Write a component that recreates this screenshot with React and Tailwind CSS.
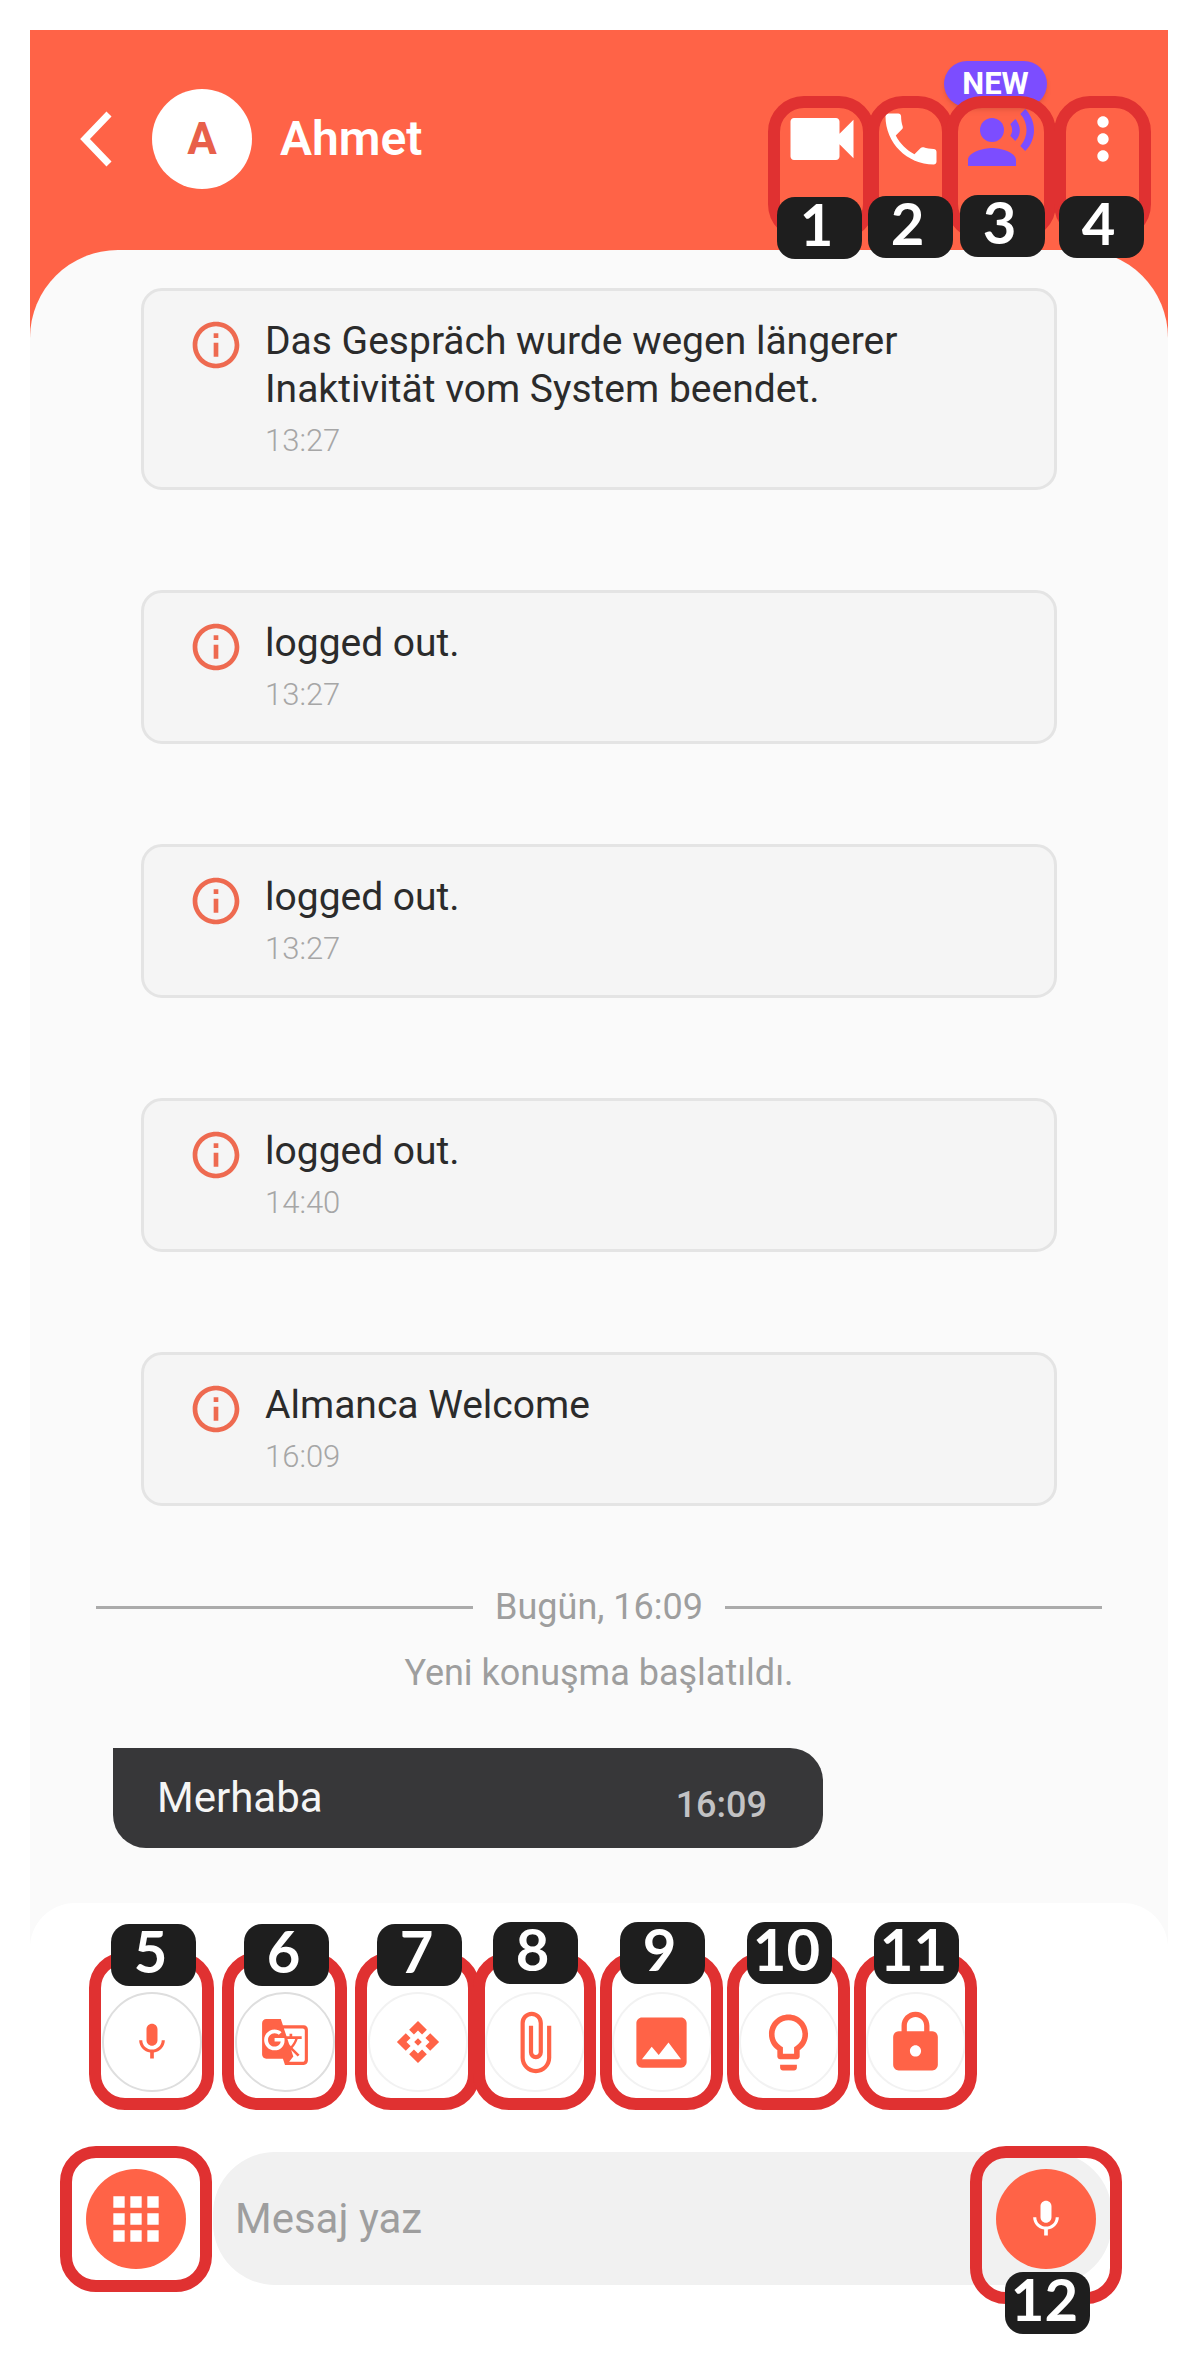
import { useState } from 'react'
import {
  MdVideocam,
  MdPhone,
  MdRecordVoiceOver,
  MdMoreVert,
  MdInfoOutline,
  MdMic,
  MdGTranslate,
  MdApi,
  MdAttachFile,
  MdImage,
  MdLightbulbOutline,
  MdLock,
  MdApps,
} from 'react-icons/md'

const notices = [
  { text: 'Das Gespräch wurde wegen längerer Inaktivität vom System beendet.', time: '13:27' },
  { text: 'logged out.', time: '13:27' },
  { text: 'logged out.', time: '13:27' },
  { text: 'logged out.', time: '14:40' },
  { text: 'Almanca Welcome', time: '16:09' },
]

const tools = [
  { n: 5, label: 'Dictate', icon: MdMic, size: 44, ring: 'border-[#dedede]' },
  { n: 6, label: 'Translate', icon: MdGTranslate, size: 50, ring: 'border-[#dedede]' },
  { n: 7, label: 'Actions', icon: MdApi, size: 46, ring: 'border-[#f2f2f2]' },
]

const attachments = [
  { n: 8, label: 'Attach file', icon: MdAttachFile },
  { n: 9, label: 'Send image', icon: MdImage },
  { n: 10, label: 'Suggestions', icon: MdLightbulbOutline },
  { n: 11, label: 'Lock chat', icon: MdLock },
]

function Frame() {
  return <span className="pointer-events-none absolute inset-0 rounded-[36px] border-[12px] border-[#e03131]" />
}

function Tag({ n, className }) {
  return (
    <span className={`absolute z-10 h-[62px] w-[85px] rounded-[18px] bg-[#1e1e1e] pr-1.5 text-center font-['Lato',sans-serif] text-[58px] font-bold leading-[54px] text-white ${className}`}>
      {n}
    </span>
  )
}

function HeaderButton({ n, label, className, tag, children }) {
  return (
    <button aria-label={label} className={`relative flex h-[144px] items-start justify-center ${className}`}>
      <span className="flex h-[86px] items-center justify-center">{children}</span>
      <Frame />
      <Tag n={n} className={tag} />
    </button>
  )
}

function ToolButton({ n, label, icon: Icon, size = 67, ring = 'border-[#f2f2f2]', className, tag }) {
  return (
    <button aria-label={label} className={`relative flex h-[158px] items-end justify-center pb-[18px] ${className}`}>
      <span className={`flex size-[100px] items-center justify-center rounded-full border-2 bg-white text-[#ff6347] ${ring}`}>
        <Icon size={size} />
      </span>
      <Frame />
      <Tag n={n} className={tag} />
    </button>
  )
}

function Notice({ text, time }) {
  return (
    <li className="flex items-start rounded-[21px] border-[3px] border-[#e4e4e4] bg-[#f5f5f5] py-[26px] pl-11 pr-[90px]">
      <MdInfoOutline size={56} className="shrink-0 text-[#ee6a50]" />
      <div className="ml-[21px]">
        <p className="text-[39px] leading-[48px] text-[#2b2b2b]">{text}</p>
        <time className="mt-2 block text-[31px] font-light leading-[40px] text-[#a6a6a6]">{time}</time>
      </div>
    </li>
  )
}

export default function App() {
  const [message, setMessage] = useState('')

  return (
    <div className="min-h-screen bg-white p-[30px] font-['Roboto',sans-serif]">
      <div className="bg-[#ff6347]">
        <header className="flex h-[220px] items-start justify-between pl-[50px] pr-[17px]">
          <div className="mt-[59px] flex h-[100px] items-center">
            <button aria-label="Back" className="text-white">
              <svg width="32" height="56" viewBox="0 0 32 56" fill="none" stroke="currentColor" strokeWidth="7">
                <path d="M29 3 5 28l24 25" />
              </svg>
            </button>
            <div className="ml-10 flex size-[100px] items-center justify-center rounded-full bg-white text-[44px] font-bold text-[#e8604a]">A</div>
            <h1 className="ml-7 text-[48px] font-semibold leading-[56px] text-white">Ahmet</h1>
          </div>

          <nav className="mt-[66px] flex text-white">
            <HeaderButton n={1} label="Video call" className="w-[107px]" tag="left-[9px] top-[101px]">
              <MdVideocam size={84} className="shrink-0" />
            </HeaderButton>
            <HeaderButton n={2} label="Call" className="-ml-2 w-[87px]" tag="left-px top-[100px]">
              <MdPhone size={68} className="shrink-0" />
            </HeaderButton>
            <HeaderButton n={3} label="Voice translation" className="-ml-2 w-[110px]" tag="left-[14px] top-[99px]">
              <MdRecordVoiceOver size={72} className="shrink-0 text-[#7c4dff]" />
              <span className="absolute -left-0.5 -top-[35px] h-[46px] w-[103px] rounded-full bg-[#7c4dff] text-center text-[31px] font-bold leading-[46px] text-white shadow-md">NEW</span>
            </HeaderButton>
            <HeaderButton n={4} label="More" className="-ml-0.5 w-[97px]" tag="left-[5px] top-[100px]">
              <MdMoreVert size={68} className="shrink-0" />
            </HeaderButton>
          </nav>
        </header>

        <main className="rounded-t-[88px] bg-[#fafafa]">
          <ul className="flex flex-col gap-[100px] px-[111px] pt-[38px]">
            {notices.map((item, i) => <Notice key={i} {...item} />)}
          </ul>

          <div className="mt-[77px] px-[66px] text-[36px] leading-[48px] text-[#9e9e9e]">
            <div className="flex items-center gap-[22px]">
              <span className="h-[3px] flex-1 bg-[#ababab]" />
              <span>Bugün, 16:09</span>
              <span className="h-[3px] flex-1 bg-[#ababab]" />
            </div>
            <p className="mt-[18px] text-center">Yeni konuşma başlatıldı.</p>
          </div>

          {/* Incoming message */}
          <div className="ml-[83px] mt-[51px] flex h-[100px] w-[710px] max-w-full items-center justify-between rounded-[33px] rounded-tl-none bg-[#373739] pl-11 pr-[56px]">
            <p className="text-[42px] leading-[56px] text-[#f5f5f5]">Merhaba</p>
            <time className="pt-3.5 text-[36px] font-medium leading-[48px] text-[#c2c2c4]">16:09</time>
          </div>

          {/* Composer */}
          <footer className="mt-[55px] rounded-t-[45px] bg-white pb-[50px] pt-[49px]">
            <div className="flex pl-[59px]">
              <div className="flex gap-2">
                {tools.map((t) => <ToolButton key={t.n} {...t} className="w-[125px]" tag="left-[22px] -top-[28px]" />)}
              </div>
              <div className="-ml-[7px] flex gap-1">
                {attachments.map((t) => <ToolButton key={t.n} {...t} className="w-[123px]" tag="left-5 -top-[30px]" />)}
              </div>
            </div>

            <form className="mt-9 flex items-start pl-[30px] pr-[56px]" onSubmit={(e) => e.preventDefault()}>
              <button type="button" aria-label="Menu" className="relative flex h-[146px] w-[152px] items-center justify-center">
                <span className="flex size-[100px] items-center justify-center rounded-full bg-[#ff6347] text-white">
                  <MdApps size={68} />
                </span>
                <Frame />
              </button>
              <div className="relative ml-px mt-1.5 flex-1">
                <input
                  aria-label="Mesaj yaz"
                  placeholder="Mesaj yaz"
                  value={message}
                  onChange={(e) => setMessage(e.target.value)}
                  className="h-[133px] w-full rounded-[62px] bg-[#f1f1f1] pl-[22px] pr-[150px] text-[42px] text-[#2b2b2b] outline-none placeholder:text-[#9e9e9e]"
                />
                <button type="button" aria-label="Record voice message" className="absolute -right-2.5 -top-1.5 flex h-[158px] w-[152px] items-start justify-center pt-[23px]">
                  <span className="flex size-[100px] items-center justify-center rounded-full bg-[#ff6347] text-white">
                    <MdMic size={44} />
                  </span>
                  <Frame />
                  <Tag n={12} className="left-[35px] top-[126px]" />
                </button>
              </div>
            </form>
          </footer>
        </main>
      </div>
    </div>
  )
}
